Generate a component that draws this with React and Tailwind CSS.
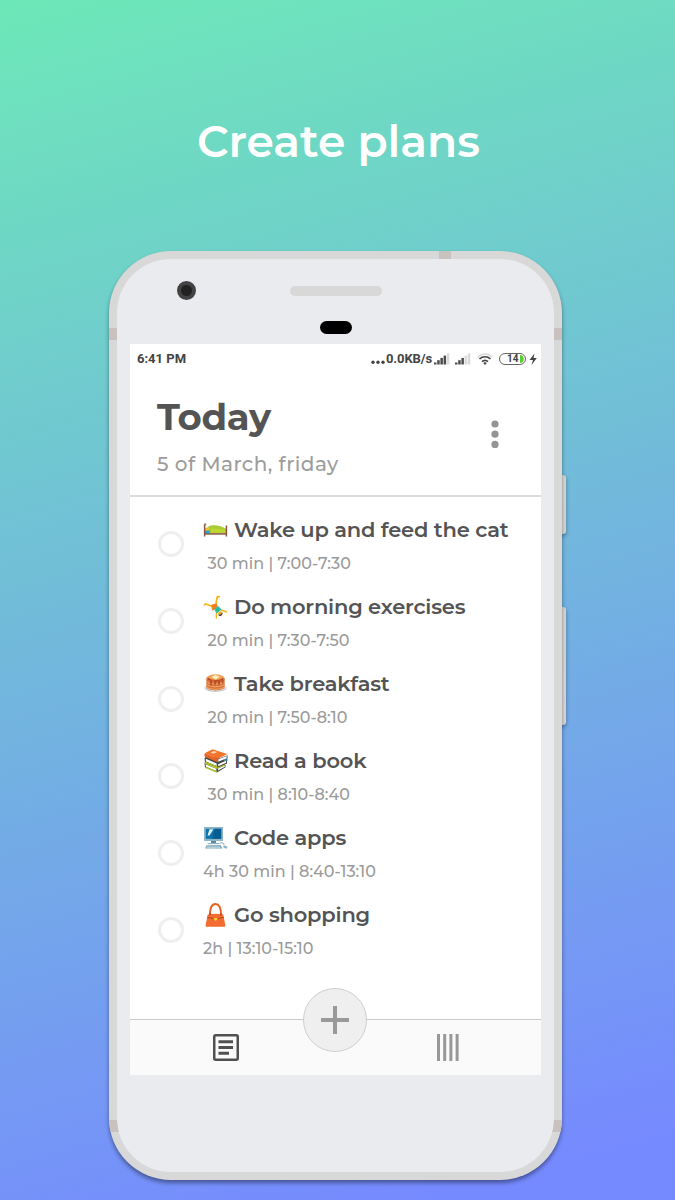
function Line({ className, children }) {
  return <span className={"block w-max whitespace-nowrap " + className}>{children}</span>;
}

const Bed = () => (
  <svg viewBox="0 0 25 24" className="h-6 w-[25px]">
    <path d="M1.500 11.500h22v4h-22z" fill="#a9653f" />
    <path d="M2 10c2-1 4-1 5 0l1 3H2z" fill="#f6c12c" />
    <path d="M1.800 12.500h5l1 3h-6z" fill="#2a9fd8" />
    <path d="M5 8.800c3-2.200 6-1.700 9-1.300 4 .5 6 2 9 3.400v4H6.500c1-2 0-3.700-1.500-6.100z" fill="#a9cb35" />
    <path d="M8 10.500c6-.5 9 1.200 15 1.200v2.900H7.500z" fill="#bfd630" />
    <path d="M1.600 16h22" stroke="#7d4b35" strokeWidth="1.300" />
    <path d="M1.600 6v12.500M23.400 7.500v11" stroke="#8b5740" strokeWidth="1.500" />
    <circle cx="2.200" cy="6.300" r="1.100" fill="#a77355" />
  </svg>
);

const Cartwheel = () => (
  <svg viewBox="0 0 25 24" className="h-6 w-[25px]" fill="none" strokeLinecap="round" strokeLinejoin="round">
    <path d="m12.800 10 1.400-8 2-.4" stroke="#f6b51c" strokeWidth="1.800" />
    <path d="M9.500 11.500 3 9l-1.500.8" stroke="#f6b51c" strokeWidth="1.800" />
    <path d="m13.500 16-.2 7" stroke="#f6b51c" strokeWidth="1.400" />
    <path d="m17 14.500 6.500 2.500" stroke="#f6b51c" strokeWidth="1.400" />
    <path d="m9 10 4.500-1 .5 3.500-4 2.500z" fill="#f47b20" stroke="#f47b20" />
    <path d="m12 14 3.200-2.500 2.600 3-3.800 3z" fill="#1fbfa8" stroke="#1fbfa8" />
    <circle cx="17.200" cy="18.300" r="2" fill="#f3aa29" />
    <path d="M15.200 19.500c1.500.8 3.500-.8 4-2.200 1 2-.7 4-2.200 3.700-1 0-1.800-.7-1.800-1.500z" fill="#5b4037" />
  </svg>
);

const Pancakes = () => (
  <svg viewBox="0 0 25 24" className="h-6 w-[25px]">
    <ellipse cx="12.500" cy="16" rx="11" ry="3.900" fill="#c3cbce" />
    <ellipse cx="12.500" cy="15.300" rx="10.300" ry="3.300" fill="#edf0f1" />
    <path d="M3.300 7c0-5 18.400-5 18.400 0v8c0 4.500-18.400 4.500-18.400 0z" fill="#d9733b" />
    <path d="M3.300 9.500c3 3.300 15.400 3.300 18.400 0M3.300 12.200c3 3.300 15.400 3.300 18.400 0M3.500 14.900c3 3.200 15 3.200 18 0" fill="none" stroke="#f4b773" strokeWidth=".8" />
    <ellipse cx="12.500" cy="6" rx="8.900" ry="3.700" fill="#f0a45c" />
    <path d="M5 5.500c1 .8 3 2.400 7.500 2.400S19 6.600 20 5.500c1 1 .6 6-.2 6s-1-3.300-1.800-3.300-1 5-2 5-.9-4-1.900-4-1.200 4-2.100 4-1-5-2-5-1 6-1.900 6-.8-6-2-6c-2 0-2.100-1.700-1.100-2.700z" fill="#bc4d27" />
    <path d="m8.500 5 4-1.900 4 1.700-3.500 2.700z" fill="#fff0bb" />
  </svg>
);

const Books = () => (
  <svg viewBox="0 0 25 24" className="h-6 w-[25px]" strokeLinejoin="round">
    <path d="m1.500 13.500 10-1 11 3.500v2.300L14 23.500 2 18.500z" fill="#45494b" />
    <path d="m2.500 15.200 10.800 4.600v2.300L3 17.800z" fill="#fff" />
    <path d="m15 19.500 6.800-3v1.300L15 21.500z" fill="#fff" />
    <path d="m2 14 11.700 5L22 15.500M2.500 18.300 14 23.200" fill="none" stroke="#b7cd29" strokeWidth="1.400" />
    <path d="m1.500 9 10-1L24 12v2.500l-9.500 4L2 13.500z" fill="#45494b" />
    <path d="m2.800 9.700 10.900 4.800v2.600L3 12.500z" fill="#fff" />
    <path d="m15.200 15.200 7.800-3.500v2l-7.800 3.600z" fill="#fff" />
    <path d="m2.300 13 12 5" stroke="#b7cd29" strokeWidth="1.200" />
    <path d="M2 5.500 14.500 10 24.500 6.300v3.200L15 13.800 2 8.500z" fill="#45494b" />
    <path d="m15.300 10.300 8.400-3.300v2.200l-8.500 3.600z" fill="#fff" />
    <path d="M2 4 9.500.3 24.300 5l-9.500 4.800z" fill="#f4742b" />
    <path d="m2 4 12.800 5.800v3.500L2.300 8C1.200 7 1 5 2 4z" fill="#e96525" />
    <path d="m7.500 3.600 3.200-1.600 3.500 1-3.500 1.700z" fill="#fbd6bd" />
    <path d="m22 10.300 2.500-.8v2.300l-1.700.8z" fill="#188db4" />
  </svg>
);

const Computer = () => (
  <svg viewBox="0 0 25 24" className="h-6 w-[25px]">
    <path d="M1 1h19v14H1z" fill="#8eb6c6" />
    <path d="M2.800 2.800h15.400v10H2.800z" fill="#0873ad" />
    <path d="M12 2.800h6.200v10H9z" fill="#055d91" />
    <path d="m4.500 9.500 2-6.200h4l-4 6.200z" fill="#e4f2f7" />
    <path d="M8 15h5v2.500H8z" fill="#578a9e" />
    <path d="M4.500 17h12v1.200h-12z" fill="#8eb6c6" />
    <path d="m3.500 19.200 14-.2 2 3.500H2z" fill="#78a5b7" />
    <path d="M4 20.200h13M3.500 21.500h14" stroke="#d8e8ed" strokeWidth=".6" />
    <path d="M17 17c3-.5 4 0 4 2" fill="none" stroke="#578a9e" strokeWidth=".7" />
    <ellipse cx="22.300" cy="21" rx="2.200" ry="1.400" fill="#8eb6c6" transform="rotate(20 22.300 21)" />
  </svg>
);

const Bag = () => (
  <svg viewBox="0 0 25 24" className="h-6 w-[25px]">
    <path d="M7 12C7 4 9 1 12.500 1S18 4 18 12" fill="none" stroke="#e76125" strokeWidth="1.900" />
    <path d="M4.700 11.500c5-1 10.600-1 15.600 0l2 11c.1.900-.3 1.300-1 1.300H3.600c-.7 0-1.100-.4-1-1.300z" fill="#f36c30" />
    <path d="M4.300 14.500c5 .2 7 2 8.200 2s3.200-1.800 8.200-2" fill="none" stroke="#983c20" strokeWidth=".8" />
    <path d="M10.800 15h3.600v1.500l-1.800 1.400-1.800-1.400z" fill="#ffc928" />
    <path d="M7 10v2.500M18 10v2.500" stroke="#b84820" strokeWidth="1.500" />
  </svg>
);

const plans = [
  { icon: Bed, title: "Wake up and feed the cat", time: "30 min | 7:00-7:30", pad: "pl-[4.500px]" },
  { icon: Cartwheel, title: "Do morning exercises", time: "20 min | 7:30-7:50", pad: "pl-[4.500px]" },
  { icon: Pancakes, title: "Take breakfast", time: "20 min | 7:50-8:10", pad: "pl-[4.500px]" },
  { icon: Books, title: "Read a book", time: "30 min | 8:10-8:40", pad: "pl-[4.500px]" },
  { icon: Computer, title: "Code apps", time: "4h 30 min | 8:40-13:10", pad: "pl-0" },
  { icon: Bag, title: "Go shopping", time: "2h | 13:10-15:10", pad: "pl-0" },
];

function Plan({ plan }) {
  const Icon = plan.icon;
  return (
    <li className="flex h-[77.1px] gap-[19px] pl-7">
      <span className="mt-[25.4px] size-[26px] shrink-0 rounded-full border-[3px] border-[#efefef]" />
      <div>
        <div className="mt-[11.7px] flex h-6 items-center gap-[6px]">
          <Icon />
          <Line className="text-[21px] leading-6 font-semibold tracking-[-0.2px] text-[#545454]">{plan.title}</Line>
        </div>
        <div className={"mt-[12.3px] " + plan.pad}>
          <Line className="text-[16px] leading-5 font-medium tracking-[0.03px] text-[#9a9a9a]">{plan.time}</Line>
        </div>
      </div>
    </li>
  );
}

function Signal({ level }) {
  return (
    <svg viewBox="0 0 16 12" className="h-3 w-4">
      {[0, 1, 2, 3, 4].map((i) => (
        <rect key={i} x={i * 3.2} y={9.5 - i * 2.3} width="2.500" height={2 + i * 2.3} fill={i < level ? "#4c4c4c" : "#dadada"} />
      ))}
    </svg>
  );
}

function StatusBar() {
  return (
    <div className="flex h-[30px] items-center pl-[7px] pr-1 font-['Roboto',sans-serif] text-[13px] font-bold text-[#444]">
      <Line className="leading-4">6:41 PM</Line>
      <div className="ml-auto flex items-center">
        <svg viewBox="0 0 14 12" className="mr-px h-3 w-3.5" fill="#444">
          <circle cx="2" cy="9.200" r="1.700" /><circle cx="7" cy="9.200" r="1.700" /><circle cx="12" cy="9.200" r="1.700" />
        </svg>
        <div className="w-[48px]"><Line className="leading-4 tracking-[-0.1px]">0.0KB/s</Line></div>
        <Signal level={4} />
        <span className="w-[5px]" />
        <Signal level={3} />
        <svg viewBox="0 0 16 12" className="ml-1.5 h-3 w-4" fill="none">
          <path d="M.8 4.300C5-.1 11-.1 15.200 4.300" stroke="#d8d8d8" strokeWidth="1.700" />
          <path d="M2.500 6c3.200-3 7.800-3 11 0M5 8.700c2-1.800 4-1.800 6 0" stroke="#424242" strokeWidth="1.700" />
          <path d="m6.200 10 1.800 2 1.800-2c-1-.9-2.600-.9-3.600 0z" fill="#424242" />
        </svg>
        <div className="ml-1.5 flex h-3 w-[27px] items-center justify-end gap-px rounded-full border-[1.500px] border-[#666] pr-[1.500px]">
          <span className="text-[10px] leading-none">14</span>
          <svg viewBox="0 0 4 8" className="h-2 w-1"><path d="M0 0c5 0 5 8 0 8z" fill="#5bcc2e" /></svg>
        </div>
        <svg viewBox="0 0 8 12" className="ml-[3px] h-3 w-2"><path d="M5.500.5.500 7H4l-1.500 5L7.800 5H4.500z" fill="#424242" /></svg>
      </div>
    </div>
  );
}

function Screen() {
  return (
    <div className="ml-[13px] flex h-[731px] w-[411px] flex-col bg-white">
      <StatusBar />
      <header className="flex h-[123px] justify-between border-b-2 border-[#dcdcdc] pl-[27px]">
        <div>
          <Line className="mt-[21px] text-[37px] leading-[44px] font-bold tracking-[-0.3px] text-[#545454]">Today</Line>
          <Line className="mt-[13px] text-[20px] leading-6 font-medium tracking-[0.48px] text-[#9d9d9d]">5 of March, friday</Line>
        </div>
        <svg viewBox="0 0 8 30" className="mt-[45px] mr-[42px] h-[30px] w-2" fill="#949494">
          <circle cx="4" cy="5" r="3.600" /><circle cx="4" cy="15.200" r="3.600" /><circle cx="4" cy="25.400" r="3.600" />
        </svg>
      </header>
      <ul className="flex-1 pt-[9px]">
        {plans.map((p) => <Plan key={p.title} plan={p} />)}
      </ul>
      <nav className="relative flex h-14 items-start justify-between border-t border-[#cbcbcb] bg-[#fafafa] pt-[14px] pr-[82px] pl-[83px]">
        <svg viewBox="0 0 26 27" className="h-[27px] w-[26px]" fill="none" stroke="#505050">
          <rect x="1.250" y="1.250" width="23.500" height="24.500" rx="1.500" strokeWidth="2.500" />
          <path d="M5.500 7.800H20M5.500 13.500H20M5.500 19.300H16" strokeWidth="2.900" />
        </svg>
        <svg viewBox="0 0 22 27" className="h-[27px] w-[22px]" fill="#989898">
          <path d="M0 0h3v27H0zM6.200 0h3v27h-3zM12.400 0h3v27h-3zM18.600 0h3v27h-3z" />
        </svg>
        <button className="absolute -top-8 left-[173.400px] flex size-16 items-center justify-center rounded-full border border-[#cecece] bg-[#efefef]">
          <svg viewBox="0 0 28 28" className="size-7"><path d="M12 0h4v12h12v4H16v12h-4V16H0v-4h12z" fill="#999" /></svg>
        </button>
      </nav>
    </div>
  );
}

function Phone() {
  return (
    <div className="relative h-[929px] w-[453px]">
      <span className="absolute top-[224px] -right-1 h-[59px] w-3 rounded-r-[3px] bg-[#d8d8d8] shadow-[0_2px_4px_rgba(0,0,0,0.35)]" />
      <span className="absolute top-[356px] -right-1 h-[118px] w-3 rounded-r-[3px] bg-[#d8d8d8] shadow-[0_2px_4px_rgba(0,0,0,0.35)]" />
      <div className="relative h-full overflow-hidden rounded-[62px] bg-[#d8d8d8] p-2 shadow-[0_3px_4px_rgba(0,0,0,0.4)]">
        <span className="absolute top-0 left-[330px] h-2 w-3 bg-[#c9c1be]" />
        <span className="absolute top-[77px] left-0 h-3 w-full bg-[#c9c1be]" />
        <span className="absolute top-[869px] left-0 h-3 w-full bg-[#c9c1be]" />
        <div className="relative h-[913px] rounded-[54px] bg-[#eaebef]">
          <div className="flex h-[85px] flex-col items-center">
            <div className="mt-[22px] grid h-[19px] w-full grid-cols-[60px_113px_1fr] items-center">
              <span className="size-[19px] translate-x-[19px] justify-self-end rounded-full border-4 border-[#424242] bg-[#212121]" />
              <span />
              <span className="h-[10px] w-[92px] rounded-full bg-[#d8d8d8]" />
            </div>
            <span className="mt-[21px] h-[13px] w-8 rounded-full bg-black" />
          </div>
          <Screen />
        </div>
      </div>
    </div>
  );
}

export default function App() {
  return (
    <main className="flex h-[1200px] w-[675px] flex-col overflow-hidden bg-[linear-gradient(165deg,#6de8b8_0%,#768aff_95%)] pl-[109px] font-['Montserrat','Inter',sans-serif]">
      <h1 className="h-[251px] pt-[114px] pl-[88px]">
        <Line className="text-[44px] leading-[54px] font-semibold text-white">Create plans</Line>
      </h1>
      <Phone />
    </main>
  );
}
